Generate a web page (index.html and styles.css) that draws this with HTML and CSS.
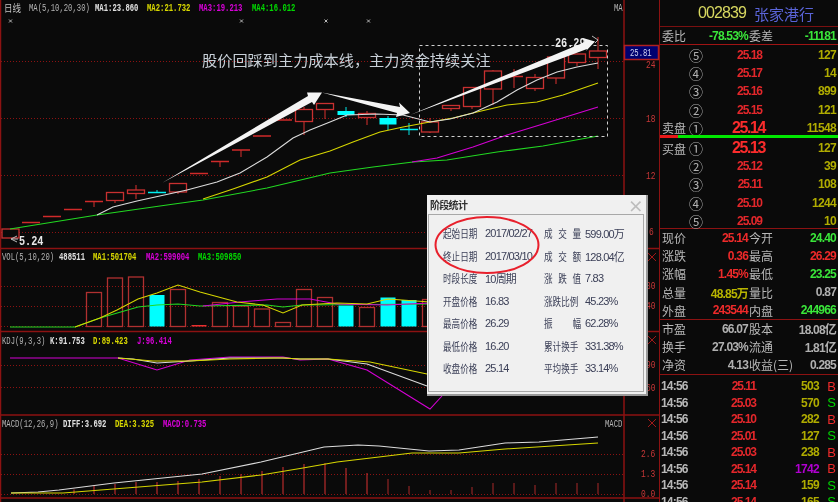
FILE: index.html
```html
<!DOCTYPE html>
<html lang="zh-CN">
<head>
  <meta charset="UTF-8" />
  <title>002839 张家港行</title>
  <link rel="stylesheet" href="styles.css">
</head>
<body>
<div class="app">

  <div class="chart">
    <svg class="plot" width="659" height="502" viewBox="0 0 659 502">
      <!-- frame -->
      <path class="frame" d="M0.5 0V502 M0 248.5H659 M0 331.5H659 M0 415H659 M0 498H659 M624 0V502" />
      <!-- grid -->
      <path class="grid" d="M1 61.5H624 M1 118.5H624 M1 175.5H624 M1 232.5H624 M1 286.5H624 M1 306.5H624 M1 326.5H624 M1 365.5H624 M1 387.5H624 M1 454.5H624 M1 474.5H624 M1 494.5H624" />

      <!-- candles -->
      <path class="wick" d="M94 201V207 M115 200V203 M136 185V199 M178 192V194 M220 161V167 M241 150V157 M304 107V135 M325 109V119 M367 111V125 M430 118V133 M451 108V111 M472 106V109 M493 70V105 M514 69V88 M535 74V91 M556 78V84 M577 62V66 M598 37V69" />
      <path class="wick-cyan" d="M157 190V193 M346 107V117 M388 116V130 M409 123V135" />
      <path class="doji" d="M22 222.5H40 M43 216.5H61 M64 209.5H82 M85 201.5H103 M190 173.5H208 M211 161.5H229 M232 150H250 M253 136H271 M274 120H292 M505 76.5H523" />
      <path class="doji-cyan" d="M148 192.5H166 M400 129.5H418" />
      <g class="up">
        <rect x="2" y="229" width="17" height="9" />
        <rect x="106.5" y="192.5" width="17" height="8" />
        <rect x="127.5" y="190" width="17" height="3.5" />
        <rect x="169.5" y="183.5" width="17" height="8.5" />
        <rect x="295.5" y="109.5" width="17" height="12" />
        <rect x="316.5" y="103.5" width="17" height="6" />
        <rect x="358.5" y="113.5" width="17" height="4" />
        <rect x="421.5" y="122" width="17" height="10" />
        <rect x="442.5" y="105.5" width="17" height="3" />
        <rect x="463.5" y="87.5" width="17" height="19" />
        <rect x="484.5" y="71" width="17" height="18" />
        <rect x="526.5" y="77.5" width="17" height="11" />
        <rect x="547.5" y="57" width="17" height="21" />
        <rect x="568.5" y="54" width="17" height="8.5" />
        <rect x="589.5" y="51" width="17" height="6.5" />
      </g>
      <rect class="down" x="337.5" y="111" width="17" height="4" />
      <rect class="down" x="379.5" y="118" width="17" height="6.5" />

      <!-- moving averages, main pane -->
      <polyline class="ln-green" points="10,229 97,215 167,205 203,200 267,188 330,173 373,167 413,162 447,160 497,152 543,146 598,136" />
      <polyline class="ln-magenta" points="412,162 437,158 473,147 507,135 543,124 598,107" />
      <polyline class="ln-yellow" points="203,199 233,189 267,177 300,160 330,151 353,142 380,132 403,127 430,122 453,118 477,112 507,105 537,102 563,95 598,83" />
      <polyline class="ln-white" points="97,215 113,207 137,201 187,190 217,182 240,173 267,157 293,138 310,130 330,122 347,115 377,114 403,115 430,122 450,119 473,113 497,102 517,90 537,80 557,72 577,67 598,63" />

      <!-- selection box -->
      <rect class="dash" x="419.5" y="45.5" width="188" height="91" />

      <!-- legends -->
      <text class="cjk-tag" x="4" y="12.5">日线</text>
      <text class="tx tx-grey" x="29" y="11">MA(5,10,20,30)</text>
      <text class="tx tx-white" x="95" y="11">MA1:23.860</text>
      <text class="tx tx-yellow" x="147" y="11">MA2:21.732</text>
      <text class="tx tx-magenta" x="199" y="11">MA3:19.213</text>
      <text class="tx tx-green" x="252" y="11">MA4:16.012</text>
      <text class="tx tx-grey" x="614" y="11">MA</text>
      <path class="tick" d="M9 19.5L12 22.5M12 19.5L9 22.5 M240 19.5L243 22.5M243 19.5L240 22.5 M324.500 19.5L327.500 22.5M327.500 19.5L324.500 22.5 M367 19.5L370 22.5M370 19.5L367 22.5" />

      <text class="tx tx-grey" x="2" y="260">VOL(5,10,20)</text>
      <text class="tx tx-white" x="59" y="260">488511</text>
      <text class="tx tx-yellow" x="93" y="260">MA1:501704</text>
      <text class="tx tx-magenta" x="146" y="260">MA2:599004</text>
      <text class="tx tx-green" x="198" y="260">MA3:509850</text>

      <text class="tx tx-grey" x="2" y="344">KDJ(9,3,3)</text>
      <text class="tx tx-white" x="50" y="344">K:91.753</text>
      <text class="tx tx-yellow" x="93" y="344">D:89.423</text>
      <text class="tx tx-magenta" x="137" y="344">J:96.414</text>

      <text class="tx tx-grey" x="2" y="427">MACD(12,26,9)</text>
      <text class="tx tx-white" x="63" y="427">DIFF:3.692</text>
      <text class="tx tx-yellow" x="115" y="427">DEA:3.325</text>
      <text class="tx tx-magenta" x="163" y="427">MACD:0.735</text>
      <text class="tx tx-grey" x="605" y="427">MACD</text>

      <!-- price marks -->
      <path class="tick" d="M17 236L11 239L17 242 M11 239H18" />
      <text class="tx-mark" x="19" y="245">5.24</text>
      <text class="tx-mark" x="555" y="47">26.29</text>
      <path class="tick" d="M592 36L598 40L595 43" />

      <!-- volume pane -->
      <g class="vol">
        <rect x="86.500" y="292.500" width="15" height="34" />
        <rect x="107.500" y="278" width="15" height="48.500" />
        <rect x="128.500" y="277" width="15" height="49.500" />
        <rect x="170.500" y="289.500" width="15" height="37" />
        <rect x="212.500" y="302.500" width="15" height="24" />
        <rect x="233.500" y="306" width="15" height="20.500" />
        <rect x="254.500" y="309" width="15" height="17.500" />
        <rect x="275.500" y="322.500" width="15" height="4" />
        <rect x="296.500" y="289.500" width="15" height="37" />
        <rect x="317.500" y="297.500" width="15" height="29" />
        <rect x="359.500" y="307.500" width="15" height="19" />
        <rect x="422.500" y="299.500" width="15" height="27" />
      </g>
      <rect class="vol-flat" x="191.500" y="325" width="15" height="1.500" />
      <g class="down">
        <rect x="149.500" y="295" width="15" height="31.500" />
        <rect x="338.500" y="305.500" width="15" height="21" />
        <rect x="380.500" y="297.500" width="15" height="29" />
        <rect x="401.500" y="300" width="15" height="26.500" />
      </g>
      <polyline class="ln-green" points="10,327 75,327 100,318 138,307 157,305 178,304 200,306 267,305 283,307 302,305 430,304" />
      <polyline class="ln-magenta" points="203,306 240,302 277,299 310,299 337,304 387,305 430,303" />
      <polyline class="ln-yellow" points="75,327 100,318 117,310 138,299 157,293 178,285 200,292 237,302 263,305 283,313 302,305 337,303 367,304 388,299 430,302" />

      <!-- kdj pane -->
      <polyline class="ln-magenta" points="10,358 118,358 157,370 190,360 230,357 283,357 300,360 328,359 367,370 430,409 442,396" />
      <polyline class="ln-white" points="118,358 133,359 157,363 190,361 230,358 283,358 300,359 328,359 367,364 427,386" />
      <polyline class="ln-yellow" points="118,358 153,361 190,361 230,359 273,358 283,358 300,359 328,359 370,362 427,374" />

      <!-- macd pane -->
      <path class="macd-bar" d="M74 489.500V494 M94 486V494 M115 484V494 M136 482V494 M157 482V494 M178 481V494 M199 479V494 M220 476V494 M241 474V494 M262 471V494 M283 467V494 M304 464V494 M325 463V494 M346 468V494 M367 473V494" />
      <path class="macd-bar dim" d="M388 479V494 M409 486V494 M430 490V494 M451 490V494 M472 487V494 M493 483V494 M514 483V494 M535 485V494 M556 483V494 M577 483V494 M598 483V494" />
      <polyline class="ln-white" points="11,493 38,492 59,490 114,483 202,474 261,462 303,452 324,447 358,445 379,446 429,451 459,450 505,443 539,442 598,437" />
      <polyline class="ln-yellow" points="11,493 63,493 126,488 202,482 261,475 303,468 337,462 379,457 412,453 459,453 505,449 598,443" />

      <!-- axis -->
      <text class="tx tx-axis" x="646" y="68">24</text>
      <text class="tx tx-axis" x="646" y="122">18</text>
      <text class="tx tx-axis" x="646" y="179">12</text>
      <text class="tx tx-axis" x="649" y="235">6</text>
      <text class="tx tx-axis" x="646" y="289">80</text>
      <text class="tx tx-axis" x="646" y="309">40</text>
      <text class="tx tx-axis" x="646" y="368">90</text>
      <text class="tx tx-axis" x="646" y="391">60</text>
      <text class="tx tx-axis" x="641" y="457">2.6</text>
      <text class="tx tx-axis" x="641" y="477">1.3</text>
      <text class="tx tx-axis" x="641" y="497">0.0</text>
      <path class="cross" d="M648 253L656 261M656 253L648 261 M648 336L656 344M656 336L648 344 M648 419L656 427M656 419L648 427" />

      <rect class="price-box" x="624.500" y="45.500" width="34" height="14" />
      <text class="tx tx-price" x="630" y="56">25.81</text>

      <!-- arrows -->
      <polygon class="arrow" points="162,183 308,96 307,92.500 322,92.500 314,105 312,102" />
      <polygon class="arrow" points="322,92.500 400,107 399,102.500 410,113 396,117 397,113" />
      <polygon class="arrow" points="410,115 585,42 583,38 595,41.500 586,51 587,49" />

      <text class="note" x="202" y="66">股价回踩到主力成本线，主力资金持续关注</text>
    </svg>

    <div class="dialog">
      <div class="dialog-title">
        <span>阶段统计</span>
        <span class="dialog-close">×</span>
      </div>
      <div class="dialog-body">
        <span class="lbl">起始日期</span><span class="val">2017/02/27</span><span class="lbl">成 交 量</span><span class="val">599.00万</span>
        <span class="lbl">终止日期</span><span class="val">2017/03/10</span><span class="lbl">成 交 额</span><span class="val">128.04亿</span>
        <span class="lbl">时段长度</span><span class="val">10周期</span><span class="lbl">涨 跌 值</span><span class="val">7.83</span>
        <span class="lbl">开盘价格</span><span class="val">16.83</span><span class="lbl">涨跌比例</span><span class="val">45.23%</span>
        <span class="lbl">最高价格</span><span class="val">26.29</span><span class="lbl lbl-wide">振 幅</span><span class="val">62.28%</span>
        <span class="lbl">最低价格</span><span class="val">16.20</span><span class="lbl">累计换手</span><span class="val">331.38%</span>
        <span class="lbl">收盘价格</span><span class="val">25.14</span><span class="lbl">平均换手</span><span class="val">33.14%</span>
      </div>
      <svg class="ring" width="110" height="62" viewBox="0 0 110 62">
        <ellipse cx="55" cy="31" rx="51.500" ry="28" />
      </svg>
    </div>
  </div>

  <div class="side">
    <div class="title"><span class="code">002839</span><span class="name">张家港行</span></div>

    <div class="stat ratio">
      <span class="key">委比</span><span class="num green">-78.53%</span><span class="key">委差</span><span class="num green">-11181</span>
    </div>

    <div class="book">
      <div class="level"><span></span><span class="step">⑤</span><span class="px">25.18</span><span class="qty">127</span></div>
      <div class="level"><span></span><span class="step">④</span><span class="px">25.17</span><span class="qty">14</span></div>
      <div class="level"><span></span><span class="step">③</span><span class="px">25.16</span><span class="qty">899</span></div>
      <div class="level"><span></span><span class="step">②</span><span class="px">25.15</span><span class="qty">121</span></div>
      <div class="level"><span class="key">卖盘</span><span class="step">①</span><span class="px px-big">25.14</span><span class="qty">11548</span></div>
    </div>
    <div class="balance"><div class="balance-buy"></div><div class="balance-sell"></div></div>
    <div class="book book-buy">
      <div class="level"><span class="key">买盘</span><span class="step">①</span><span class="px px-big">25.13</span><span class="qty">127</span></div>
      <div class="level"><span></span><span class="step">②</span><span class="px">25.12</span><span class="qty">39</span></div>
      <div class="level"><span></span><span class="step">③</span><span class="px">25.11</span><span class="qty">108</span></div>
      <div class="level"><span></span><span class="step">④</span><span class="px">25.10</span><span class="qty">1244</span></div>
      <div class="level"><span></span><span class="step">⑤</span><span class="px">25.09</span><span class="qty">10</span></div>
    </div>

    <div class="block">
      <div class="stat"><span class="key">现价</span><span class="num red">25.14</span><span class="key">今开</span><span class="num green">24.40</span></div>
      <div class="stat"><span class="key">涨跌</span><span class="num red">0.36</span><span class="key">最高</span><span class="num red">26.29</span></div>
      <div class="stat"><span class="key">涨幅</span><span class="num red">1.45%</span><span class="key">最低</span><span class="num green">23.25</span></div>
      <div class="stat"><span class="key">总量</span><span class="num olive">48.85万</span><span class="key">量比</span><span class="num grey">0.87</span></div>
      <div class="stat"><span class="key">外盘</span><span class="num red">243544</span><span class="key">内盘</span><span class="num green">244966</span></div>
    </div>

    <div class="block block-short">
      <div class="stat"><span class="key">市盈</span><span class="num grey">66.07</span><span class="key">股本</span><span class="num grey">18.08亿</span></div>
      <div class="stat"><span class="key">换手</span><span class="num grey">27.03%</span><span class="key">流通</span><span class="num grey">1.81亿</span></div>
      <div class="stat"><span class="key">净资</span><span class="num grey">4.13</span><span class="key">收益(三)</span><span class="num grey">0.285</span></div>
    </div>

    <div class="trades">
      <div class="trade"><span class="time">14:56</span><span class="tp">25.11</span><span class="tv">503</span><span class="red">B</span></div>
      <div class="trade"><span class="time">14:56</span><span class="tp">25.03</span><span class="tv">570</span><span class="green-s">S</span></div>
      <div class="trade"><span class="time">14:56</span><span class="tp">25.10</span><span class="tv">282</span><span class="red">B</span></div>
      <div class="trade"><span class="time">14:56</span><span class="tp">25.01</span><span class="tv">127</span><span class="green-s">S</span></div>
      <div class="trade"><span class="time">14:56</span><span class="tp">25.03</span><span class="tv">238</span><span class="red">B</span></div>
      <div class="trade"><span class="time">14:56</span><span class="tp">25.14</span><span class="tv tv-big">1742</span><span class="red">B</span></div>
      <div class="trade"><span class="time">14:56</span><span class="tp">25.14</span><span class="tv">159</span><span class="green-s">S</span></div>
      <div class="trade"><span class="time">14:56</span><span class="tp">25.14</span><span class="tv">165</span><span class="green-s">S</span></div>
    </div>
  </div>

</div>
</body>
</html>
```

FILE: styles.css
```css
* { box-sizing: border-box; }

html, body {
  margin: 0; padding: 0;
  background: #0a0a0a;
  overflow: hidden;
}

.app {
  display: flex;
  width: 838px; height: 502px;
  background: #0a0a0a;
  overflow: hidden;
  font-family: "Liberation Sans", "Noto Sans CJK SC", sans-serif;
  filter: blur(0.35px);
}

/* chart side */
.chart {
  position: relative;
  flex: none;
  width: 659px; height: 502px;
}
.plot { display: block; }
.plot polyline, .plot path { fill: none; }

.frame { stroke: #8c1212; stroke-width: 1.5; }
.grid { stroke: #8c1212; stroke-width: 1; stroke-dasharray: 1 2; }

.wick { stroke: #d8302f; stroke-width: 1; }
.wick-cyan { stroke: #00e6e6; stroke-width: 1; }
.doji { stroke: #d02a2a; stroke-width: 1.5; }
.doji-cyan { stroke: #00f0f0; stroke-width: 1.5; }
.up rect { fill: #0a0a0a; stroke: #c83030; stroke-width: 1.3; }
.down, .down rect { fill: #00ffff; stroke: none; }

.ln-white { stroke: #dcdcdc; stroke-width: 1.1; }
.ln-yellow { stroke: #d6d600; stroke-width: 1.1; }
.ln-magenta { stroke: #d400d4; stroke-width: 1.1; }
.ln-green { stroke: #22d822; stroke-width: 1.1; }

.dash { fill: none; stroke: #cfcfcf; stroke-width: 1; stroke-dasharray: 3 3; }

.vol rect { fill: none; stroke: #b03030; stroke-width: 1.3; }
.vol-flat { fill: #e83030; }
.macd-bar { stroke: #d83030; stroke-width: 1; }
.macd-bar.dim { stroke: #a82828; }

/* chart labels are narrow bitmap-like letters */
.tx, .tx-mark, .cjk-tag {
  transform-box: fill-box;
  transform-origin: left center;
}
.tx {
  font-family: "Liberation Mono", monospace;
  font-size: 10.5px;
  font-weight: bold;
  transform: scaleX(0.69);
}
.tx-grey { fill: #b4b4b4; font-weight: normal; }
.tx-white { fill: #e0e0e0; }
.tx-yellow { fill: #d8d800; }
.tx-magenta { fill: #d800d8; }
.tx-green { fill: #00d800; }
.tx-axis { fill: #c83838; font-size: 11.5px; font-weight: normal; }
.tx-price { fill: #d0d0f0; font-weight: normal; }
.tx-mark {
  font-family: "Liberation Mono", monospace;
  font-size: 12px; font-weight: bold;
  fill: #e8e8e8;
  transform: scaleX(0.85);
}
.cjk-tag {
  font-family: "Noto Sans CJK SC", sans-serif;
  font-size: 10.5px;
  fill: #c4c4c4;
  transform: scaleX(0.81);
}
.tick { stroke: #b8b8b8; stroke-width: 1; }
.cross { stroke: #a01818; stroke-width: 1; }
.price-box { fill: #000070; stroke: #b02020; stroke-width: 1.5; }
.arrow { fill: #f4f4f4; }
.note {
  font-family: "Noto Sans CJK SC", sans-serif;
  font-size: 15.2px;
  fill: #c8d0d8;
}

/* stage statistics dialog */
.dialog {
  position: absolute;
  left: 427px; top: 195px;
  width: 221px; height: 201px;
  background: #f0f0f0;
  border-right: 2px solid #9a9a9a;
  border-bottom: 2px solid #9a9a9a;
  display: flex; flex-direction: column;
  color: #3c4058;
}
.dialog-title {
  flex: none;
  display: flex; justify-content: space-between; align-items: center;
  height: 19px;
  padding: 0 3px;
  font-family: "Noto Sans CJK SC", sans-serif;
  font-size: 10px; font-weight: bold;
  letter-spacing: -0.7px;
  color: #303030;
}
.dialog-close { font-size: 16px; color: #bdbdbd; }
.dialog-body {
  flex: 1;
  margin: 0 2px 2px 1px;
  border: 1px solid #a8a8a8;
  padding: 7px 0 0 14px;
  display: grid;
  grid-template-columns: 42px 59px 41px 1fr;
  grid-auto-rows: 22.5px;
  align-items: center;
  font-size: 11px;
  white-space: nowrap;
}
.lbl {
  display: inline-block;
  justify-self: start;
  font-family: "Noto Sans CJK SC", sans-serif;
  font-size: 11px;
  word-spacing: 4.8px;
  transform: scaleX(0.78);
  transform-origin: left center;
}
.lbl-wide { word-spacing: 23px; }
.val { letter-spacing: -0.8px; }
.ring {
  position: absolute;
  left: 5px; top: 19px;
}
.ring ellipse { fill: none; stroke: #e8202c; stroke-width: 2; }

/* quote panel */
.side {
  flex: 1;
  border-left: 1.5px solid #8c1212;
  height: 502px;
  display: flex; flex-direction: column;
  overflow: hidden;
  font-size: 12px;
  font-weight: bold;
  white-space: nowrap;
}
.title {
  flex: none;
  height: 27px;
  border-bottom: 1.5px solid #7a1010;
  padding-left: 38px;
  display: flex; align-items: center; gap: 8px;
}
.code { color: #d8d860; font-size: 16px; font-weight: 400; letter-spacing: -0.9px; }
.name { color: #5a64d8; font-size: 15px; font-family: "Noto Sans CJK SC", sans-serif; font-weight: 400; }

.key {
  font-family: "Noto Sans CJK SC", sans-serif;
  font-size: 12px; font-weight: 400;
  color: #b8b8b8;
}
.stat {
  height: 18.2px;
  padding: 0 2px;
  display: grid;
  grid-template-columns: 24px 61px auto 1fr;
  column-gap: 1px;
  align-items: center;
}
.ratio { height: 18px; border-bottom: 1.5px solid #a01414; flex: none; }
.num { text-align: right; letter-spacing: -0.8px; }
.red { color: #ee2a2a; }
.green { color: #3ae63a; }
.olive { color: #b8b400; }
.grey { color: #b0b0b0; }

.book { flex: none; height: 90px; }
.level {
  height: 18.2px;
  padding: 0 2px;
  display: grid;
  grid-template-columns: 24px 20px 56px 1fr;
  align-items: center;
}
.step {
  font-family: "Noto Sans CJK SC", sans-serif;
  font-size: 14px; font-weight: 400;
  color: #b0b0b0;
  text-align: center;
}
.px { color: #e4272b; text-align: right; letter-spacing: -1px; }
.px-big { font-size: 16px; letter-spacing: -1.4px; color: #fb2c2c; margin-right: -3px; }
.qty { color: #b0ac00; text-align: right; letter-spacing: -0.7px; }

.balance { flex: none; height: 3px; display: flex; }
.balance-buy { width: 18px; background: #e81818; }
.balance-sell { flex: 1; background: #00e800; }

.book-buy { border-bottom: 1.5px solid #8c1212; height: 90.5px; }
.block { flex: none; border-bottom: 1.5px solid #8c1212; height: 91px; }
.block-short { height: 55.5px; }

.trades { flex: 1; padding-top: 3px; overflow: hidden; }
.trade {
  height: 16.5px;
  display: grid;
  grid-template-columns: 30px 65px 63px 1fr;
  align-items: center;
  padding-left: 1px;
}
.time { color: #b8b8b8; letter-spacing: -0.8px; }
.tp { color: #e4272b; text-align: right; letter-spacing: -1px; }
.tv { color: #b0ac00; text-align: right; letter-spacing: -0.7px; }
.tv-big { color: #b000d0; }
.trade span:last-child { text-align: center; font-weight: 400; font-size: 13px; padding-left: 6px; }
.green-s { color: #00d400; }
```
